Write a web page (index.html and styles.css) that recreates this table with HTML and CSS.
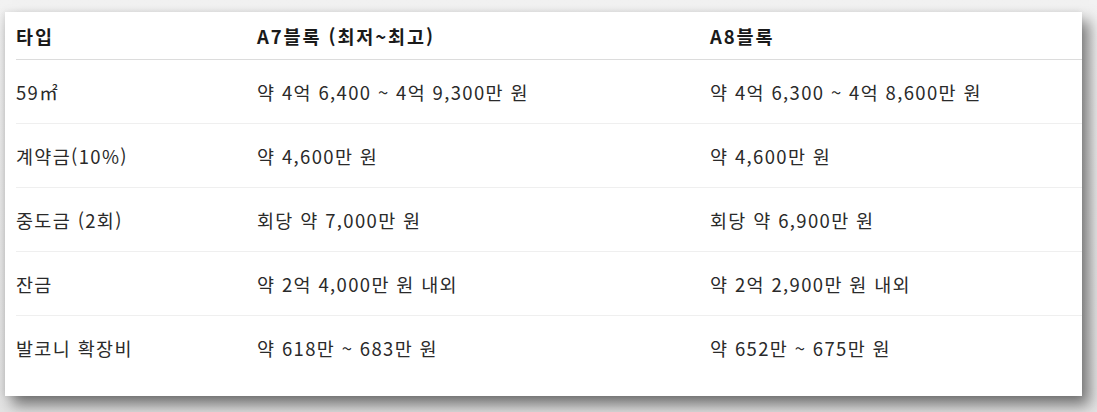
FILE: index.html
```html
<!DOCTYPE html>
<html lang="ko">
<head>
<meta charset="utf-8">
<link rel="stylesheet" href="styles.css">
</head>
<body>
<div class="card">
  <table class="price">
    <colgroup><col class="c1"><col class="c2"><col class="c3"></colgroup>
    <thead>
      <tr><th>타입</th><th>A7블록 (최저~최고)</th><th>A8블록</th></tr>
    </thead>
    <tbody>
      <tr><td>59㎡</td><td>약 4억 6,400 ~ 4억 9,300만 원</td><td>약 4억 6,300 ~ 4억 8,600만 원</td></tr>
      <tr><td>계약금(10%)</td><td>약 4,600만 원</td><td>약 4,600만 원</td></tr>
      <tr><td>중도금 (2회)</td><td>회당 약 7,000만 원</td><td>회당 약 6,900만 원</td></tr>
      <tr><td>잔금</td><td>약 2억 4,000만 원 내외</td><td>약 2억 2,900만 원 내외</td></tr>
      <tr class="last"><td>발코니 확장비</td><td>약 618만 ~ 683만 원</td><td>약 652만 ~ 675만 원</td></tr>
    </tbody>
  </table>
</div>
</body>
</html>
```
FILE: styles.css
```css
html, body {
  margin: 0;
  padding: 0;
}
body {
  width: 1097px;
  height: 412px;
  background: linear-gradient(#f2f2f2, #e4e4e4);
  font-family: "Noto Sans CJK KR", "Noto Sans", sans-serif;
  overflow: hidden;
}
.card {
  margin: 12px 0 0 5px;
  width: 1077px;
  height: 384px;
  background: #fff;
  box-shadow: 7px 9px 14px rgba(0,0,0,0.5), -2px 0 6px rgba(0,0,0,0.08);
  padding-left: 11px;
  box-sizing: border-box;
}
.price {
  width: 1066px;
  border-collapse: collapse;
  table-layout: fixed;
}
.c1 { width: 241px; }
.c2 { width: 453px; }
.price th {
  text-align: left;
  font-weight: 700;
  font-size: 18.5px;
  letter-spacing: 1.9px;
  color: #1a1a1a;
  height: 47px;
  padding: 0;
  border-bottom: 1px solid #dcdcdc;
  vertical-align: middle;
}
.price td {
  color: #2a2a2a;
  font-size: 18.5px;
  letter-spacing: 1.35px;
  height: 63px;
  padding: 0;
  border-bottom: 1px solid #efefef;
  vertical-align: middle;
}
.price tr.last td {
  border-bottom: none;
  height: 64px;
}
```
